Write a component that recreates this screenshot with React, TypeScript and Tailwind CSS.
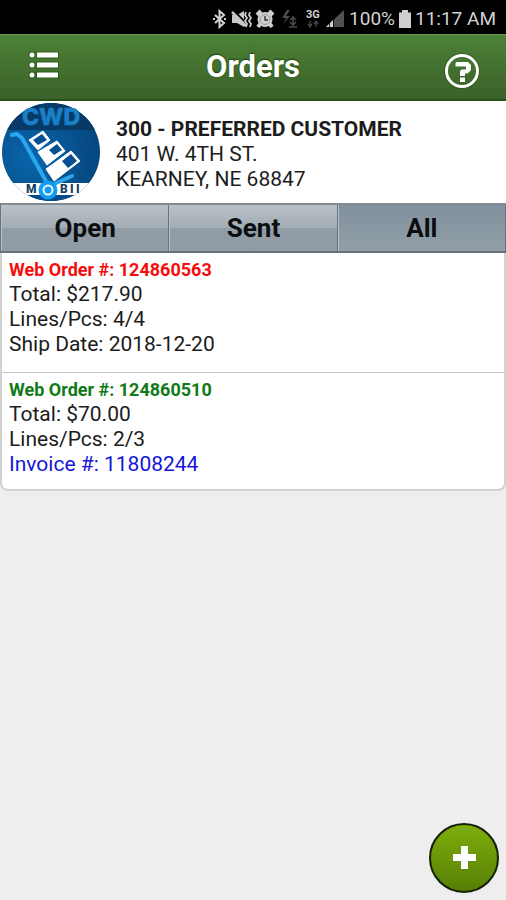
import { useState } from "react";
import clsx from "clsx";

type Tab = "Open" | "Sent" | "All";

interface Order {
  id: string;
  status: "open" | "sent";
  total: string;
  lines: string;
  shipDate?: string;
  invoice?: string;
}

const TABS: Tab[] = ["Open", "Sent", "All"];

const ORDERS: Order[] = [
  { id: "124860563", status: "open", total: "$217.90", lines: "4/4", shipDate: "2018-12-20" },
  { id: "124860510", status: "sent", total: "$70.00", lines: "2/3", invoice: "11808244" },
];

function StatusIcons() {
  return (
    <svg width="133" height="20" viewBox="0 0 133 20" aria-hidden="true">
      {/* bluetooth */}
      <path
        d="M2 6l9 8-4.500 4V2l4.500 4-9 8M0 10h2M11 10h2"
        fill="none"
        stroke="#d0d0d0"
        strokeWidth="2"
      />
      {/* muted speaker with vibration marks */}
      <path d="M19 6h5l7-4v16l-7-4h-5z" fill="#c8c8c8" />
      <path d="M20 1l14 14" stroke="#000" strokeWidth="2" />
      <path d="M19 3l14 14" stroke="#c8c8c8" strokeWidth="2.500" />
      <path d="M33 3l-1 3 2 3-2 3 2 3-1 3M37 3l-1 3 2 3-2 3 2 3-1 3" fill="none" stroke="#c8c8c8" strokeWidth="1.800" />
      {/* alarm */}
      <circle cx="52" cy="10.500" r="7.500" fill="#cfcfcf" />
      <path d="M44 6l4-4M60 6l-4-4M47 15l-2 3M57 15l2 3" stroke="#cfcfcf" strokeWidth="4" />
      <circle cx="52" cy="10.500" r="5" fill="none" stroke="#999" strokeWidth="1" />
      <path d="M52 7v4h3" fill="none" stroke="#333" strokeWidth="1.400" />
      {/* download booster */}
      <path d="M74 1l-5 8h4l-3 6 7-8h-4l4-6z" fill="#4c4c4c" />
      <path d="M80 8v7M77 11l3-3 3 3M77 13l3 3 3-3M76 18h8" fill="none" stroke="#484848" strokeWidth="1.600" />
      {/* network type */}
      <text x="93" y="9" fontFamily="Roboto, sans-serif" fontSize="11" fontWeight="700" fill="#d0d0d0">
        3G
      </text>
      <path d="M97 12v6M95 15l2 3 2-3M103 18v-6M101 15l2-3 2 3" fill="none" stroke="#444" strokeWidth="1.400" />
      {/* signal */}
      <path d="M113 18L131 1v17z" fill="#505050" />
      <path d="M113 18l7-7v7z" fill="#d0d0d0" />
      <path d="M116.500 8v11M120.500 6v13" stroke="#000" strokeWidth="0.800" />
    </svg>
  );
}

function StatusBar() {
  return (
    <div className="flex h-[34px] items-center justify-end bg-black pt-[3px] pr-[10px] text-[19px] leading-6 text-[#d2d2d2]">
      <StatusIcons />
      <span className="ml-[3px]">100%</span>
      <svg className="mx-1" width="12" height="18" viewBox="0 0 12 18" aria-hidden="true">
        <path d="M0 2.500h3V0h6v2.500h3V18H0z" fill="#cfcfcf" />
      </svg>
      <span>11:17 AM</span>
    </div>
  );
}

function MenuIcon() {
  return (
    <svg width="34" height="28" viewBox="0 0 34 28" aria-hidden="true">
      <g fill="none" stroke="#1d5208" strokeWidth="2" opacity="0.600">
        <circle cx="6" cy="4" r="2.500" />
        <circle cx="6" cy="14" r="2.500" />
        <circle cx="6" cy="24" r="2.500" />
        <path d="M11 1.500h21v5H11zM11 11.500h21v5H11zM11 21.500h21v5H11z" />
      </g>
      <g fill="#fff">
        <circle cx="6" cy="4" r="2.500" />
        <circle cx="6" cy="14" r="2.500" />
        <circle cx="6" cy="24" r="2.500" />
        <path d="M11 1.500h21v5H11zM11 11.500h21v5H11zM11 21.500h21v5H11z" />
      </g>
    </svg>
  );
}

function HelpIcon() {
  return (
    <svg width="36" height="36" viewBox="0 0 36 36" aria-hidden="true">
      <circle cx="18" cy="18" r="16" fill="none" stroke="#1d5208" strokeWidth="4" opacity="0.500" />
      <circle cx="18" cy="18" r="15.500" fill="none" stroke="#fff" strokeWidth="3" />
      <path d="M11.500 10l1-1H24l3 3v5l-3.500 3.500H21V23h-5v-5l1.500-1.500h4.500V13.500H11.500z" fill="#fff" />
      <path d="M16 24.500h5V29h-5z" fill="#fff" />
    </svg>
  );
}

function Logo() {
  return (
    <svg className="size-[98px] shrink-0" viewBox="0 0 98 98" role="img" aria-label="CWD Mobii">
      <defs>
        <clipPath id="disc">
          <circle cx="49" cy="49" r="49" />
        </clipPath>
        <radialGradient id="disc-fill" cx="0.300" cy="0.550" r="0.700">
          <stop offset="0" stopColor="#0867ac" />
          <stop offset="1" stopColor="#06467f" />
        </radialGradient>
      </defs>
      <g clipPath="url(#disc)">
        <rect width="98" height="98" fill="url(#disc-fill)" />
        <rect width="98" height="27" fill="#073a66" />
        <rect y="80" width="98" height="12" fill="#fff" />
        <rect y="92" width="98" height="6" fill="#064a8c" />
      </g>
      <text
        x="49"
        y="22"
        textAnchor="middle"
        fontFamily="Inter, Roboto, sans-serif"
        fontSize="23"
        fontWeight="800"
        fill="#1a80c6"
        stroke="#1a80c6"
        strokeWidth="0.500"
      >
        CWD
      </text>
      <g fontFamily="Roboto, sans-serif" fontSize="12" fontWeight="800" fill="#10395c">
        <text x="24" y="90">M</text>
        <text x="58" y="90">B</text>
        <text x="68" y="90">I</text>
        <text x="74" y="90">I</text>
      </g>
      {/* boxes on the cart */}
      <g fill="#fff" stroke="#fff" strokeWidth="1" strokeLinejoin="round">
        <path d="M27 37l14-9 7 9-12 10z" />
        <path d="M36 49l19-11 8 10-18 14z" />
        <path d="M44 66l25-18 9 10-26 20z" />
      </g>
      <g fill="#084f8f">
        <path d="M31 37l9-6 5 6-9 5z" />
        <path d="M47 47l8-6 5 6-8 5z" />
        <path d="M60 58l9-7 6 7-9 7z" />
      </g>
      {/* hand truck */}
      <path
        d="M10 32l5-1 5 4 25 45M52 81l18-8"
        fill="none"
        stroke="#2ba5ee"
        strokeWidth="4"
        strokeLinecap="round"
        strokeLinejoin="round"
      />
      <circle cx="46" cy="87" r="9.500" fill="#129bf0" />
      <circle cx="46" cy="87" r="4.500" fill="none" stroke="#e4f5ff" strokeWidth="2" />
    </svg>
  );
}

function Header() {
  return (
    <header className="grid h-[67px] grid-cols-[1fr_auto_1fr] items-center border-t border-b-2 border-t-[#6b9a50] border-b-[#28511a] bg-linear-to-b from-[#4d8137] to-[#3a6129] px-[26px]">
      <button type="button" aria-label="Menu" className="justify-self-start pb-1">
        <MenuIcon />
      </button>
      <h1 className="text-[31px] leading-9 font-bold text-white [text-shadow:0_-1px_2px_#174205]">Orders</h1>
      <button type="button" aria-label="Help" className="justify-self-end pt-2">
        <HelpIcon />
      </button>
    </header>
  );
}

function OrderRow({ order }: { order: Order }) {
  return (
    <li className="border-b border-[#c8c8c8] px-[7px] pt-1 last:border-b-0">
      <h2
        className={clsx(
          "text-lg leading-[25px] font-bold",
          order.status === "open" ? "text-[#f50d0d]" : "text-[#117a17]"
        )}
      >
        Web Order #: {order.id}
      </h2>
      <p>Total: {order.total}</p>
      <p>Lines/Pcs: {order.lines}</p>
      {order.shipDate && <p className="pb-[15px]">Ship Date: {order.shipDate}</p>}
      {order.invoice && (
        <a href="#invoice" className="block pb-3 text-[#1616d8]">
          Invoice #: {order.invoice}
        </a>
      )}
    </li>
  );
}

export default function App() {
  const [tab, setTab] = useState<Tab>("All");
  const orders = ORDERS.filter((o) => tab === "All" || o.status === tab.toLowerCase());

  return (
    <div className="min-h-screen bg-[#eeeeee] font-['Roboto',sans-serif] text-[21px] leading-[25px] text-[#1c1c1c]">
      <StatusBar />
      <Header />
      <section className="flex items-center gap-4 bg-white p-[2px]">
        <Logo />
        <div className="pt-1">
          <p className="font-bold">300 - PREFERRED CUSTOMER</p>
          <p>401 W. 4TH ST.</p>
          <p>KEARNEY, NE 68847</p>
        </div>
      </section>

      <div role="tablist" className="grid grid-cols-3 border-y-2 border-l border-t-[#818b93] border-b-[#66737e] border-l-[#66737e]">
        {TABS.map((t) => (
          <button
            key={t}
            type="button"
            role="tab"
            aria-selected={tab === t}
            onClick={() => setTab(t)}
            className={clsx(
              "h-[46px] border-x border-l-[#b9c3ca] border-r-[#66737e] text-[26px] leading-8 font-bold text-[#0b0e11]",
              tab === t
                ? "bg-linear-to-b from-[#80909c] to-[#929fa9]"
                : "bg-[linear-gradient(#bac1c7,#a2acb4_50%,#929da6_50%,#8e9aa4)]"
            )}
          >
            {t}
          </button>
        ))}
      </div>

      <ul className="rounded-b-lg border-x-2 border-b-2 border-[#d2d2d2] bg-white">
        {orders.map((o) => (
          <OrderRow key={o.id} order={o} />
        ))}
      </ul>

      <button
        type="button"
        aria-label="New order"
        className="fixed right-[7px] bottom-[7px] flex size-[70px] items-center justify-center rounded-full border-2 border-[#142006] bg-linear-to-b from-[#7fae0d] to-[#567f05]"
      >
        <svg width="24" height="24" viewBox="0 0 24 24" aria-hidden="true">
          <path d="M9 0h7v8h8v7h-8v8H9v-8H1V8h8z" fill="#fff" />
        </svg>
      </button>
    </div>
  );
}
